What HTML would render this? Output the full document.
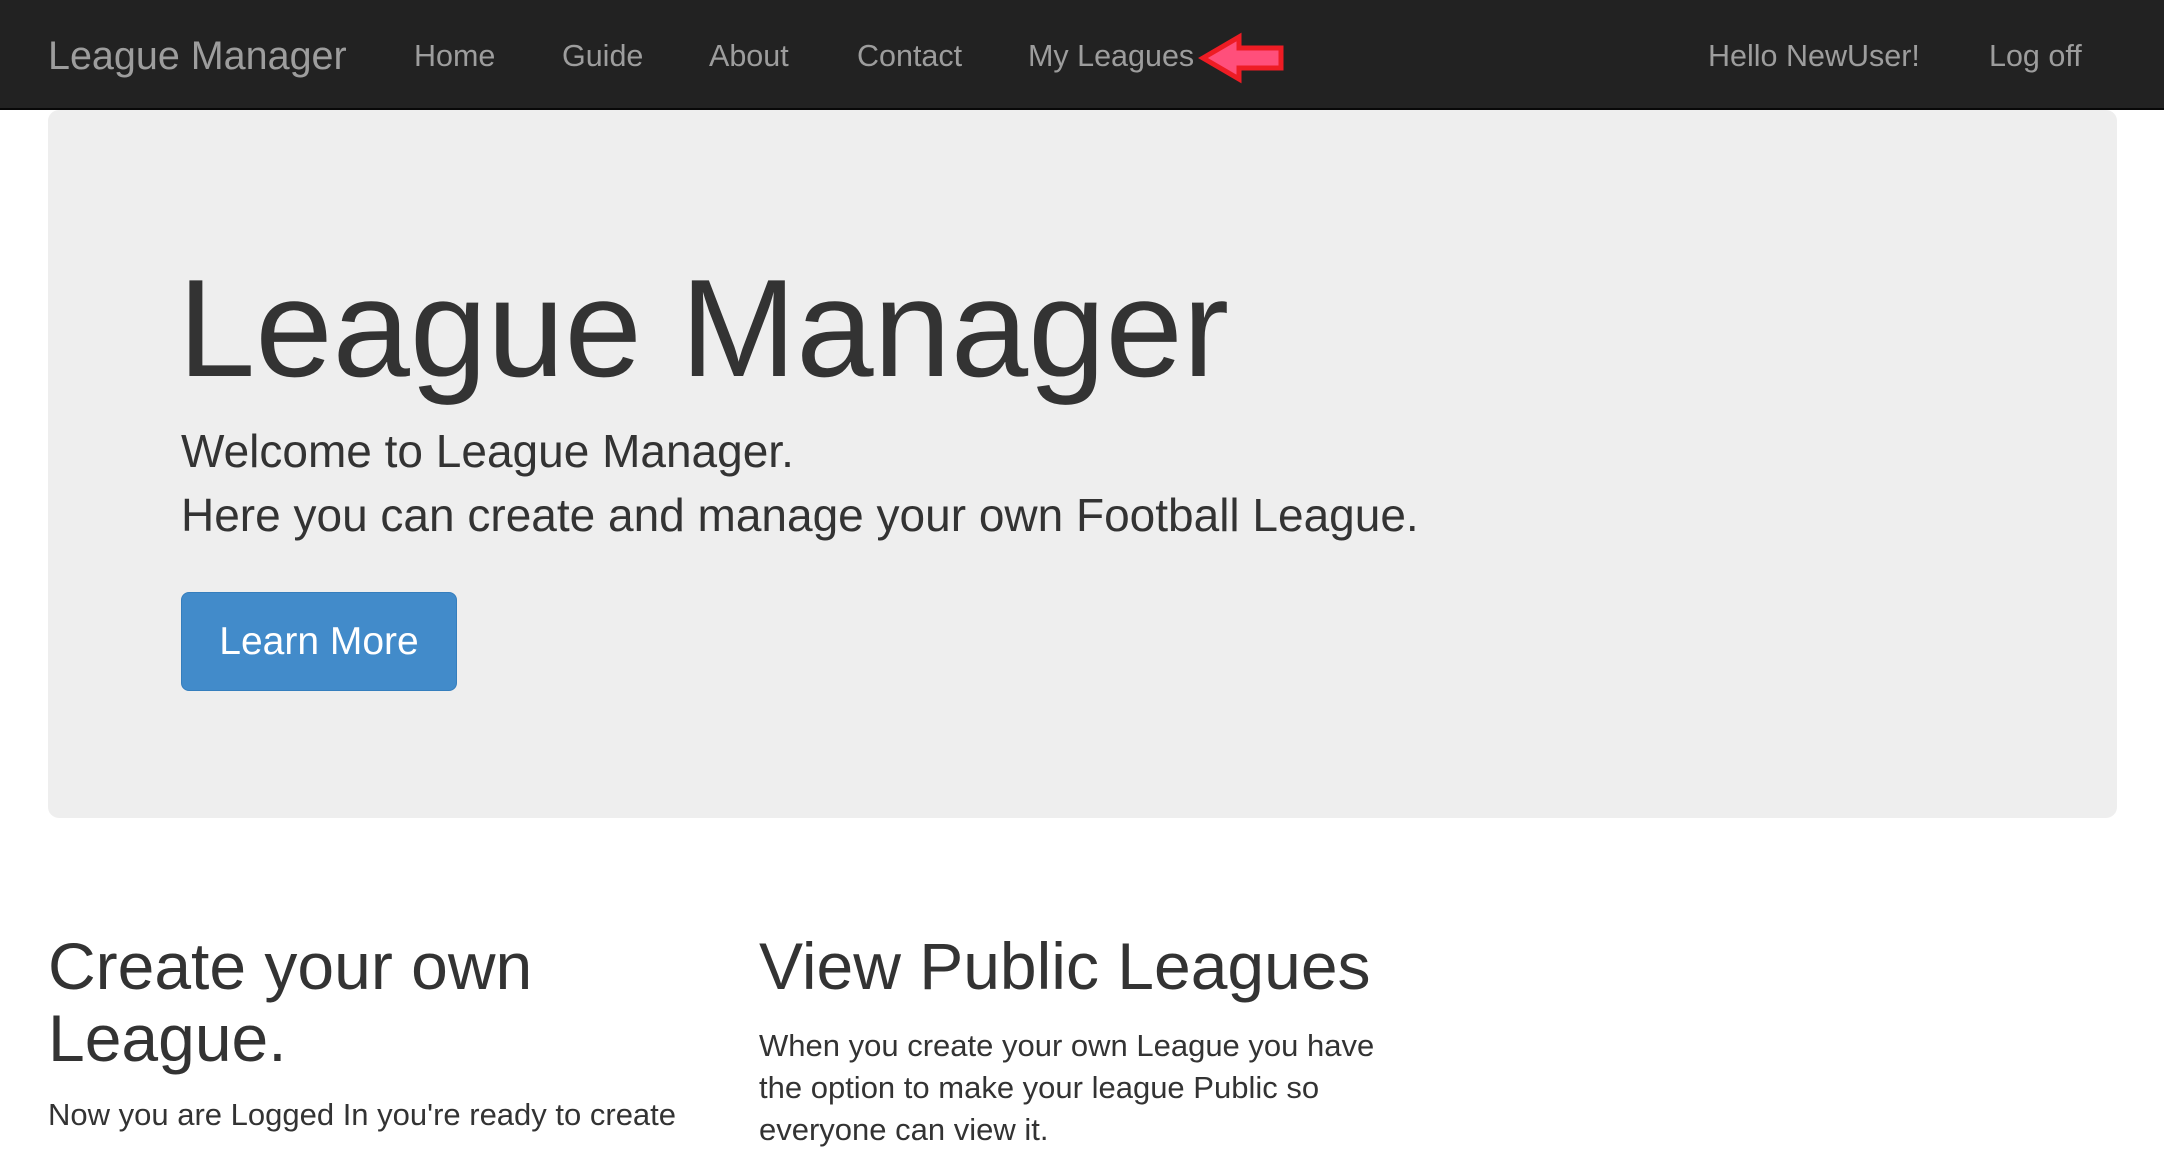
<!DOCTYPE html>
<html><head><meta charset="utf-8"><style>
*{margin:0;padding:0;box-sizing:border-box}
body{width:2164px;height:1132px;overflow:hidden;background:#fff;font-family:"Liberation Sans",Arial,sans-serif;color:#333;position:relative}
.nav{position:absolute;left:0;top:0;width:2164px;height:110px;background:#222;border-bottom:2px solid #080808}
.a{position:absolute;white-space:nowrap}
.n{font-size:30.5px;line-height:40px;top:36px;color:#9d9d9d}
.jumbo{position:absolute;left:48px;top:110px;width:2069px;height:708px;background:#eee;border-radius:11px}
.btn{position:absolute;left:181px;top:592px;width:276px;height:99px;background:#428bca;border:1px solid #357ebd;border-radius:8px;color:#fff;font-size:39px;line-height:97px;text-align:center}
</style></head><body>
<div class="nav">
<div class="a" style="left:48px;top:33px;font-size:39.5px;line-height:46px;color:#9d9d9d">League Manager</div>
<div class="a n" style="left:414px">Home</div>
<div class="a n" style="left:562px">Guide</div>
<div class="a n" style="left:709px">About</div>
<div class="a n" style="left:857px">Contact</div>
<div class="a n" style="left:1028px">My Leagues</div>
<div class="a n" style="left:1708px">Hello NewUser!</div>
<div class="a n" style="left:1989px">Log off</div>
<svg class="a" style="left:1198px;top:32px" width="90" height="52" viewBox="0 0 90 52">
<polygon points="5,26 41,5 41,16 83,16 83,36 41,36 41,47" fill="#ff4f7b" stroke="#ee1c24" stroke-width="5" stroke-linejoin="miter"/>
</svg>
</div>
<div class="jumbo"></div>
<div class="a" style="left:178px;top:254px;font-size:139px;line-height:150px">League Manager</div>
<div class="a" style="left:181px;top:419px;font-size:46px;line-height:64px">Welcome to League Manager.<br>Here you can create and manage your own Football League.</div>
<div class="btn">Learn More</div>
<div class="a" style="left:48px;top:930px;font-size:66px;line-height:72px">Create your own<br>League.</div>
<div class="a" style="left:48px;top:1094px;font-size:31px;line-height:42px">Now you are Logged In you're ready to create</div>
<div class="a" style="left:759px;top:930px;font-size:66px;line-height:72px">View Public Leagues</div>
<div class="a" style="left:759px;top:1025px;font-size:31px;line-height:42px">When you create your own League you have<br>the option to make your league Public so<br>everyone can view it.</div>
</body></html>
